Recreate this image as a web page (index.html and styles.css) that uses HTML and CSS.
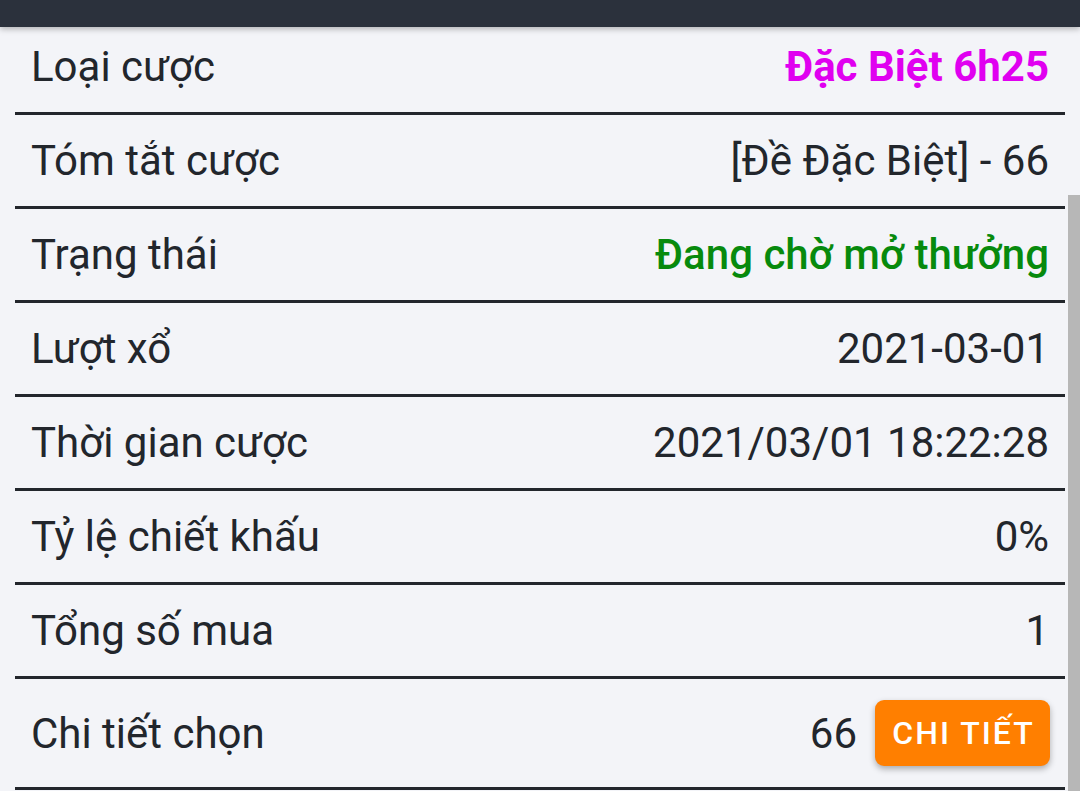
FILE: index.html
```html
<!DOCTYPE html>
<html lang="vi">
<head>
<meta charset="utf-8">
<link rel="stylesheet" href="styles.css">
</head>
<body>
<div class="topbar"></div>
<div class="scrollbar"></div>
<div class="list">
  <div class="row"><span class="label">Loại cược</span><span class="value magenta">Đặc Biệt 6h25</span></div>
  <div class="row"><span class="label">Tóm tắt cược</span><span class="value">[Đề Đặc Biệt] - 66</span></div>
  <div class="row"><span class="label">Trạng thái</span><span class="value green">Đang chờ mở thưởng</span></div>
  <div class="row"><span class="label">Lượt xổ</span><span class="value">2021-03-01</span></div>
  <div class="row"><span class="label">Thời gian cược</span><span class="value">2021/03/01 18:22:28</span></div>
  <div class="row"><span class="label">Tỷ lệ chiết khấu</span><span class="value">0%</span></div>
  <div class="row"><span class="label">Tổng số mua</span><span class="value">1</span></div>
  <div class="row tall"><span class="label">Chi tiết chọn</span><span class="value with-btn">66 <button class="btn">CHI TIẾT</button></span></div>
</div>
</body>
</html>
```
FILE: styles.css
```css
html, body {
  margin: 0;
  padding: 0;
  background: #f3f4f8;
  overflow: hidden;
  height: 791px;
}
body {
  font-family: Roboto, "Noto Sans", sans-serif;
  color: #22262c;
  position: relative;
}
.topbar {
  position: absolute;
  top: 0;
  left: 0;
  right: 0;
  height: 27px;
  background: #2b313c;
  box-shadow: 0 2px 6px rgba(0,0,0,0.28);
  z-index: 2;
}
.scrollbar {
  position: absolute;
  right: 0;
  top: 195px;
  width: 12px;
  bottom: 0;
  background: #b7b7b7;
  z-index: 2;
}
.list {
  margin: 0 15px;
  padding-top: 21px;
}
.row {
  display: flex;
  justify-content: space-between;
  align-items: center;
  height: 91px;
  padding: 0 16px;
  border-bottom: 3px solid #22262c;
  font-size: 42px;
}
.row.tall {
  height: 108px;
  padding-right: 15px;
}
.label { font-weight: 400; }
.value { font-weight: 400; }
.magenta { color: #e000f0; font-weight: 700; }
.green { color: #078a0d; font-weight: 500; }
.with-btn {
  display: flex;
  align-items: center;
  gap: 18px;
}
.btn {
  font-family: Roboto, "Noto Sans", sans-serif;
  font-size: 32px;
  font-weight: 500;
  letter-spacing: 2px;
  color: #fff;
  background: #ff7f00;
  border: none;
  border-radius: 9px;
  width: 175px;
  height: 66px;
  padding: 0 0 0 2px;
  box-shadow: 0 3px 6px rgba(0,0,0,0.3);
}
```
